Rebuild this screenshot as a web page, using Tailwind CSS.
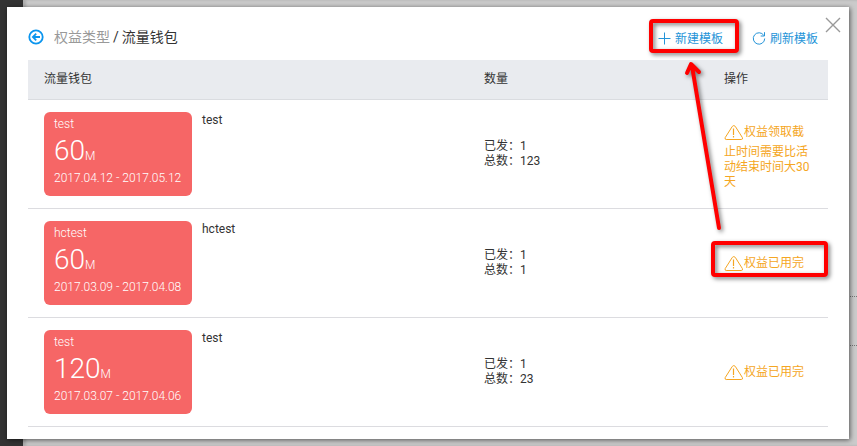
<!DOCTYPE html>
<html lang="zh-CN">
<head>
    <meta charset="UTF-8">
    <meta name="viewport" content="width=device-width, initial-scale=1.0">
    <title>流量钱包</title>
    <script src="https://cdn.jsdelivr.net/npm/@tailwindcss/browser@4"></script>
</head>
<body class="relative flex min-h-screen overflow-hidden bg-[#cbcbcb] font-['Roboto','Noto_Sans_CJK_SC',sans-serif] text-xs text-[#333]">

    <!-- Page behind the dialog -->
    <div class="w-[23px] shrink-0 bg-[#333]"></div>
    <div class="grow pt-[296px] shadow-[inset_3px_0_3px_rgba(0,0,0,0.15)]">
        <div class="h-[50px] border-y border-dotted border-[#777]"></div>
    </div>

    <!-- Dialog -->
    <main class="absolute top-[7px] right-2 bottom-[7px] left-[7px] bg-white px-[21px] shadow-[1px_1px_5px_rgba(0,0,0,0.6)]">
        <header class="flex h-[53px] items-center justify-between pt-1.5 pr-2.5">
            <div class="flex items-center text-sm">
                <a href="#" aria-label="返回" class="mr-2.5 text-[#0b95ee]">
                    <svg class="size-4" viewBox="0 0 16 16" fill="none" stroke="currentColor" stroke-width="1.8"><circle cx="8" cy="8" r="6.7"/><path d="M12 8H5M8.2 4.7L4.9 8l3.3 3.3"/></svg>
                </a>
                <a href="#" class="text-[#999]">权益类型</a>
                <span class="mx-[3px]">/</span>
                <h1>流量钱包</h1>
            </div>
            <div class="flex gap-[29px] pt-1 text-[#2494d8]">
                <button type="button" class="flex items-center gap-1">
                    <svg class="size-3.5" viewBox="0 0 14 14" fill="none" stroke="currentColor"><path d="M7.5 .5v12M1.5 6.5h12"/></svg>
                    新建模板
                </button>
                <button type="button" class="flex items-center gap-1">
                    <svg class="size-3.5" viewBox="0 0 14 14" fill="none" stroke="currentColor"><path d="M11.8 3.4A5.7 5.7 0 1 0 12.7 6.5M12.5 .2v3.8H8.7"/></svg>
                    刷新模板
                </button>
            </div>
        </header>
        <button type="button" aria-label="关闭" class="absolute top-2.5 right-2 text-[#999]">
            <svg class="size-4" viewBox="0 0 16 16" fill="none" stroke="currentColor" stroke-width="1.4"><path d="M1 1l14 14M15 1L1 15"/></svg>
        </button>

        <table class="w-full table-fixed text-left">
            <thead>
                <tr class="h-[39px] border-b border-[#dadce0] bg-[#e9ebef]">
                    <th class="w-[55%] px-4 font-normal">流量钱包</th>
                    <th class="w-[30%] px-4 font-normal">数量</th>
                    <th class="w-[15%] px-4 font-normal">操作</th>
                </tr>
            </thead>
            <tbody>
                <tr class="h-[109px] border-b border-[#dcdce0]">
                    <td class="px-4">
                        <div class="flex gap-2.5">
                            <div class="h-[84px] w-[148px] rounded-md bg-[#f66666] px-2.5 pt-1 leading-4 font-light text-white">
                                <p>test</p>
                                <p><span class="text-[28px] leading-[38px]">60</span>M</p>
                                <p class="whitespace-nowrap">2017.04.12 - 2017.05.12</p>
                            </div>
                            <p class="leading-4">test</p>
                        </div>
                    </td>
                    <td class="px-4 leading-[15px]">
                        <p>已发：1</p>
                        <p>总数：123</p>
                    </td>
                    <td class="px-4 pt-[3px] leading-[15px] text-[#f5a623]">
                        <svg class="my-1 inline h-4 w-5" viewBox="0 2 20 16" fill="none" stroke="currentColor" stroke-linejoin="round"><path d="M8.3 3.4L1.2 14.6Q.6 16.5 2.2 16.5H17.4Q19 16.5 18.4 14.6L11.3 3.4Q9.8 1.6 8.3 3.4Z"/><path d="M9.5 5.5v6.5M9.5 13v1.5" stroke-width="1.2"/></svg>权益领取截止时间需要比活动结束时间大30天
                    </td>
                </tr>
                <tr class="h-[109px] border-b border-[#dcdce0]">
                    <td class="px-4">
                        <div class="flex gap-2.5">
                            <div class="h-[84px] w-[148px] rounded-md bg-[#f66666] px-2.5 pt-1 leading-4 font-light text-white">
                                <p>hctest</p>
                                <p><span class="text-[28px] leading-[38px]">60</span>M</p>
                                <p class="whitespace-nowrap">2017.03.09 - 2017.04.08</p>
                            </div>
                            <p class="leading-4">hctest</p>
                        </div>
                    </td>
                    <td class="px-4 leading-[15px]">
                        <p>已发：1</p>
                        <p>总数：1</p>
                    </td>
                    <td class="px-4 pt-[3px] leading-[15px] text-[#f5a623]">
                        <svg class="my-1 inline h-4 w-5" viewBox="0 2 20 16" fill="none" stroke="currentColor" stroke-linejoin="round"><path d="M8.3 3.4L1.2 14.6Q.6 16.5 2.2 16.5H17.4Q19 16.5 18.4 14.6L11.3 3.4Q9.8 1.6 8.3 3.4Z"/><path d="M9.5 5.5v6.5M9.5 13v1.5" stroke-width="1.2"/></svg>权益已用完
                    </td>
                </tr>
                <tr class="h-[109px] border-b border-[#dcdce0]">
                    <td class="px-4">
                        <div class="flex gap-2.5">
                            <div class="h-[84px] w-[148px] rounded-md bg-[#f66666] px-2.5 pt-1 leading-4 font-light text-white">
                                <p>test</p>
                                <p><span class="text-[28px] leading-[38px]">120</span>M</p>
                                <p class="whitespace-nowrap">2017.03.07 - 2017.04.06</p>
                            </div>
                            <p class="leading-4">test</p>
                        </div>
                    </td>
                    <td class="px-4 leading-[15px]">
                        <p>已发：1</p>
                        <p>总数：23</p>
                    </td>
                    <td class="px-4 pt-[3px] leading-[15px] text-[#f5a623]">
                        <svg class="my-1 inline h-4 w-5" viewBox="0 2 20 16" fill="none" stroke="currentColor" stroke-linejoin="round"><path d="M8.3 3.4L1.2 14.6Q.6 16.5 2.2 16.5H17.4Q19 16.5 18.4 14.6L11.3 3.4Q9.8 1.6 8.3 3.4Z"/><path d="M9.5 5.5v6.5M9.5 13v1.5" stroke-width="1.2"/></svg>权益已用完
                    </td>
                </tr>
            </tbody>
        </table>
    </main>

    <!-- Red markers and the arrow between them -->
    <svg class="pointer-events-none absolute top-0 right-0 h-[290px] w-[217px] drop-shadow-[2px_2px_2px_rgba(0,0,0,0.5)]" viewBox="0 0 217 290" fill="none" stroke="#f00" stroke-width="4" stroke-linecap="round" stroke-linejoin="round">
        <rect x="11" y="21" width="86" height="30" rx="2"/>
        <rect x="73" y="243" width="113" height="32" rx="2"/>
        <path d="M79 228L52 66M47 73l4-9 8 8"/>
    </svg>
</body>
</html>
